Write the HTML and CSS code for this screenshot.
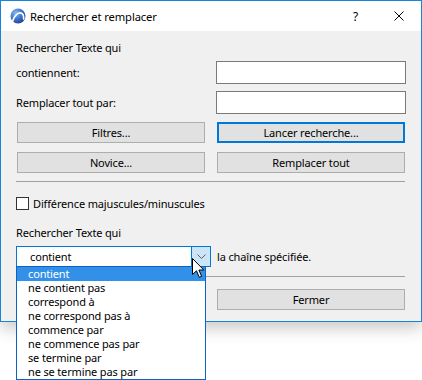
FILE: index.html
```html
<!DOCTYPE html>
<html lang="fr">
<head>
<meta charset="utf-8">
<title>Rechercher et remplacer</title>
<link rel="stylesheet" href="styles.css">
</head>
<body>
<div class="window">
  <div class="titlebar">
    <svg class="appicon" width="16" height="16" viewBox="0 0 16 16">
      <defs>
        <radialGradient id="g" cx="0.35" cy="0.3" r="0.8">
          <stop offset="0" stop-color="#8cb8f0"/>
          <stop offset="0.55" stop-color="#3a6fcc"/>
          <stop offset="1" stop-color="#1a3a8a"/>
        </radialGradient>
      </defs>
      <circle cx="8" cy="8" r="7.5" fill="url(#g)"/>
      <path d="M2.6 13.2 C4.5 7 8.5 3.6 11.6 5.2 C13.4 6.2 13.8 8.6 13.6 10.8" fill="none" stroke="#fff" stroke-width="1.7" stroke-linecap="round"/>
    </svg>
    <span class="title">Rechercher et remplacer</span>
    <span class="help">?</span>
    <svg class="close" width="10" height="10" viewBox="0 0 10 10">
      <path d="M0.5 0.5 L9.5 9.5 M9.5 0.5 L0.5 9.5" stroke="#000" stroke-width="1"/>
    </svg>
  </div>
  <div class="content">
    <div class="label l1">Rechercher Texte qui</div>
    <div class="row r1"><span>contiennent:</span><div class="input"></div></div>
    <div class="row r2"><span>Remplacer tout par:</span><div class="input"></div></div>
    <div class="row b1"><div class="btn">Filtres...</div><div class="btn default">Lancer recherche...</div></div>
    <div class="row b2"><div class="btn">Novice...</div><div class="btn">Remplacer tout</div></div>
    <div class="sep s1"></div>
    <div class="check"><span class="box"></span><span>Différence majuscules/minuscules</span></div>
    <div class="label l2">Rechercher Texte qui</div>
    <div class="combo-row">
      <div class="combo">
        <span class="value">contient</span>
        <span class="arrow">
          <svg width="9" height="5" viewBox="0 0 9 5"><path d="M0.5 0.5 L4.5 4.5 L8.5 0.5" fill="none" stroke="#606060" stroke-width="1"/></svg>
        </span>
      </div>
      <span class="after">la chaîne spécifiée.</span>
      <ul class="list">
        <li class="sel">contient</li>
        <li>ne contient pas</li>
        <li>correspond à</li>
        <li>ne correspond pas à</li>
        <li>commence par</li>
        <li>ne commence pas par</li>
        <li>se termine par</li>
        <li>ne se termine pas par</li>
      </ul>
      <svg class="cursor" width="13" height="21" viewBox="0 0 13 21">
        <path d="M0.5 0.5 L0.5 16.5 L4.5 12.8 L7.3 19.3 L9.6 18.3 L6.9 12 L11.8 12 Z" fill="#fff" stroke="#000" stroke-width="1" stroke-linejoin="miter"/>
      </svg>
    </div>
    <div class="sep s2"></div>
    <div class="row b3"><div></div><div class="btn">Fermer</div></div>
  </div>
</div>
</body>
</html>
```
FILE: styles.css
```css
* { box-sizing: border-box; }
html, body { margin: 0; padding: 0; background: #fff; }
body {
  font-family: "Noto Sans", "Open Sans", sans-serif;
  font-size: 11px;
  letter-spacing: -0.15px;
  color: #000;
  width: 422px;
  height: 380px;
  overflow: hidden;
}
.window {
  width: 422px;
  height: 322px;
  border: 1px solid #1883d7;
  background: #f0f0f0;
  box-shadow: 0 6px 16px rgba(0,0,0,0.22);
  position: relative;
}
.titlebar {
  height: 30px;
  background: #fff;
  display: flex;
  align-items: center;
  padding-left: 9px;
}
.appicon { flex: none; margin-top: 0; }
.title { margin-left: 4px; font-size: 11.2px; letter-spacing: -0.1px; }
.help { margin-left: auto; font-size: 12px; margin-right: 36px; }
.close { margin-right: 17px; }
.content {
  padding: 0 0 0 15px;
}
.label { height: 16px; line-height: 16px; }
.l1 { margin-top: 9px; }
.row {
  display: grid;
  grid-template-columns: 190px 190px;
  column-gap: 10px;
  align-items: center;
}
.r1 { margin-top: 5px; height: 23px; }
.r2 { margin-top: 7px; height: 23px; }
.input {
  height: 23px;
  background: #fff;
  border: 1px solid #7a7a7a;
}
.b1 { margin-top: 8px; height: 21px; }
.b2 { margin-top: 9px; height: 21px; }
.b3 { margin-top: 12px; height: 21px; }
.btn {
  height: 21px;
  margin: 0 1px;
  background: #e1e1e1;
  border: 1px solid #adadad;
  display: flex;
  align-items: center;
  justify-content: center;
  padding-bottom: 1px;
}
.btn.default { border: 2px solid #0078d7; }
.sep {
  width: 389px;
  height: 1px;
  background: #a0a0a0;
}
.s1 { margin-top: 8px; }
.s2 { margin-top: 9px; }
.check {
  margin-top: 15px;
  height: 13px;
  display: flex;
  align-items: center;
  gap: 4px;
}
.box {
  width: 13px;
  height: 13px;
  background: #fff;
  border: 1px solid #333;
  flex: none;
}
.l2 { margin-top: 15px; }
.combo-row {
  margin-top: 5px;
  height: 21px;
  display: grid;
  grid-template-columns: 195px auto;
  column-gap: 5px;
  align-items: center;
  position: relative;
}
.combo {
  height: 21px;
  border: 1px solid #0078d7;
  background: #fff;
  display: flex;
  align-items: center;
}
.combo .value { padding-left: 13px; flex: 1; }
.combo .arrow {
  width: 19px;
  height: 19px;
  background: #cce4f7;
  border-left: 1px solid #0078d7;
  display: flex;
  align-items: center;
  justify-content: center;
}
.after { padding-left: 1px; }
.list {
  position: absolute;
  left: 0;
  top: 20px;
  width: 190px;
  margin: 0;
  padding: 0;
  list-style: none;
  background: #fff;
  border: 1px solid #0a64c0;
  z-index: 2;
}
.list li {
  height: 14px;
  line-height: 14px;
  padding-left: 11px;
}
.list li.sel {
  background: #3390e8;
  color: #fff;
}
.cursor {
  position: absolute;
  left: 176px;
  top: 12px;
  z-index: 3;
}
```
